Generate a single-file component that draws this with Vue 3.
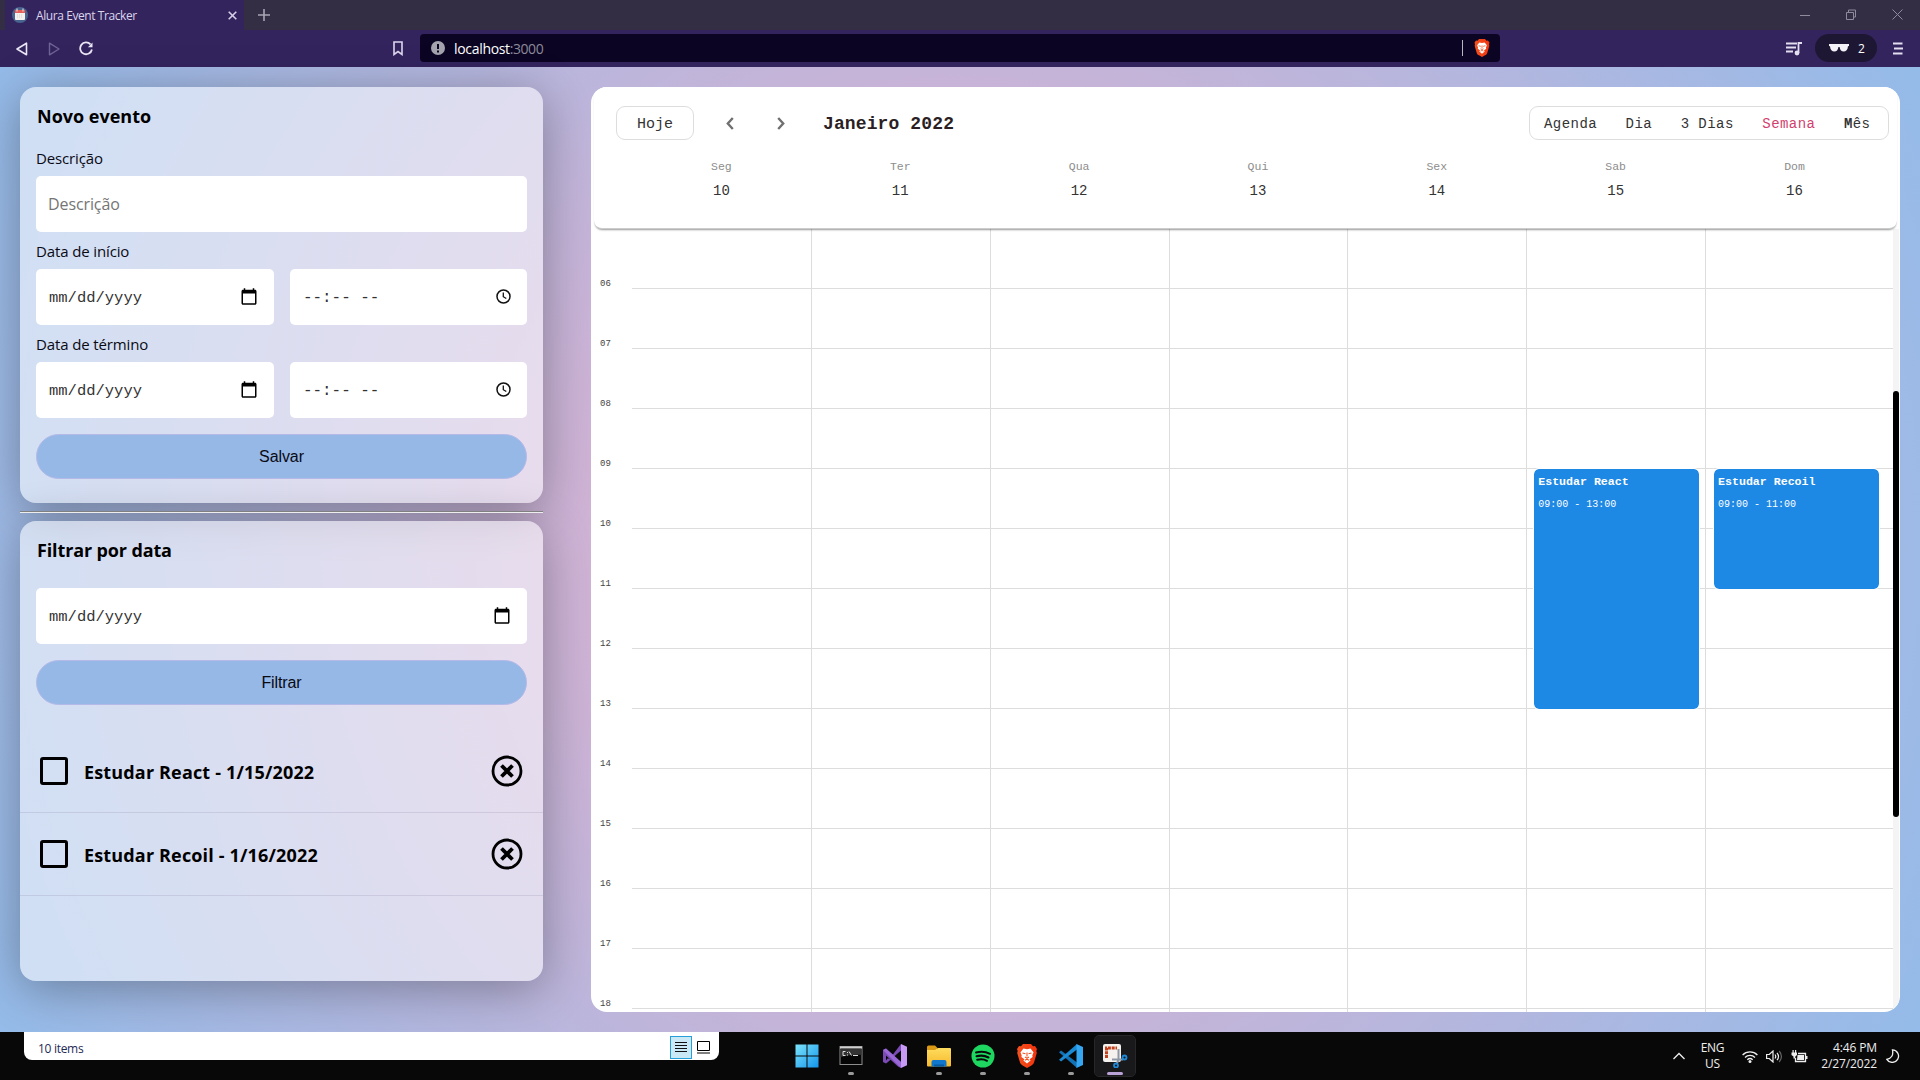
<script setup>
const hours = ['06', '07', '08', '09', '10', '11', '12', '13', '14', '15', '16', '17', '18']
const days = [['Seg', 10], ['Ter', 11], ['Qua', 12], ['Qui', 13], ['Sex', 14], ['Sab', 15], ['Dom', 16]]
const events = {
  5: { title: 'Estudar React', time: '09:00 - 13:00', hours: 4 },
  6: { title: 'Estudar Recoil', time: '09:00 - 11:00', hours: 2 },
}
const dateRows = ['Data de início', 'Data de término']
const tasks = ['Estudar React - 1/15/2022', 'Estudar Recoil - 1/16/2022']
</script>

<template>
  <svg width="0" height="0" class="defs" aria-hidden="true">
    <defs>
      <linearGradient id="gWin" x1="0" y1="0" x2="1" y2="1"><stop offset="0" stop-color="#7be3fb" /><stop offset="1" stop-color="#1495ec" /></linearGradient>
      <linearGradient id="gFold" x1="0" y1="0" x2="0" y2="1"><stop offset="0" stop-color="#ffdc5e" /><stop offset="1" stop-color="#f6b92c" /></linearGradient>
      <linearGradient id="gBrave" x1="0" y1="0" x2="1" y2="0"><stop offset="0" stop-color="#f4511e" /><stop offset="1" stop-color="#f2330d" /></linearGradient>
      <symbol id="brave" viewBox="0 0 20 24">
        <path fill="url(#gBrave)" d="M6 0h8l2 2.300 2-.3 2 3-.7 2 .5 2-2.800 9.500c-.5 1.500-1.500 2.300-3 3.300L10 24l-4-2.200c-1.500-1-2.500-1.800-3-3.300L.2 9l.5-2L0 5l2-3 2 .3z" />
        <path fill="#fff" d="M10 5.200l3.500-.7 3 3.700-1.200 3.200.3 1.600-3 2.200 1 1.300L10 19.500 6.400 16.500l1-1.300-3-2.200.3-1.600-1.200-3.200 3-3.700z" />
        <path d="M5.500 9l3 .8M14.500 9l-3 .8M10 8.500v4M8 13l2 1.200L12 13M8 16.200l2-1 2 1" stroke="#f4511e" stroke-width="1.100" fill="none" />
      </symbol>
      <symbol id="cal" viewBox="0 0 24 24">
        <path fill="#000" d="M20 3h-1V1h-2v2H7V1H5v2H4c-1.100 0-2 .9-2 2v16c0 1.100.9 2 2 2h16c1.100 0 2-.9 2-2V5c0-1.100-.9-2-2-2zm0 18H4V8h16v13z" />
      </symbol>
    </defs>
  </svg>
  <div class="screen">
    <header class="tabs">
      <div class="tab">
        <svg width="16" height="16" viewBox="0 0 16 16"><circle cx="8" cy="8" r="8" fill="#49638f" /><rect x="3" y="3" width="10" height="10" rx="1" fill="#f4f0ec" /><path d="M3 3h10v3H3z" fill="#e5605a" /><path d="M5 1.500v3M11 1.500v3" stroke="#f8e6e4" stroke-width="1" /><path d="M5 8h6M5 10h6" stroke="#d5ced0" stroke-dasharray="1 1" /></svg>
        <span>Alura Event Tracker</span>
        <svg class="x" width="9" height="9" viewBox="0 0 9 9"><path d="M.7.7l7.600 7.600M8.300.7L.7 8.300" stroke="#d5cfe6" stroke-width="1.600" /></svg>
      </div>
      <svg class="plus" width="12" height="12" viewBox="0 0 12 12"><path d="M6 0v12M0 6h12" stroke="#a9a5b4" stroke-width="1.600" /></svg>
      <div class="win">
        <svg width="10" height="11" viewBox="0 0 10 11"><path d="M0 6.500h10" stroke="#8f8b9c" /></svg>
        <svg width="10" height="11" viewBox="0 0 10 11"><path d="M.5 3.500h7v7h-7zM2.500 3V1h7v7H8" stroke="#8f8b9c" fill="none" /></svg>
        <svg width="11" height="11" viewBox="0 0 11 11"><path d="M.5.5l10 10M10.500.5l-10 10" stroke="#8f8b9c" /></svg>
      </div>
    </header>
    <nav class="bar">
      <div class="navs">
        <svg width="12" height="14" viewBox="0 0 12 14"><path d="M10.500 1.200v11.600L1 7z" fill="none" stroke="#eae6f4" stroke-width="1.600" stroke-linejoin="round" /></svg>
        <svg width="12" height="14" viewBox="0 0 12 14"><path d="M1.500 1.200v11.600L11 7z" fill="none" stroke="#6f6495" stroke-width="1.400" stroke-linejoin="round" /></svg>
        <svg width="15" height="15" viewBox="0 0 15 15"><path d="M12.900 8.500A5.900 5.900 0 1 1 11.500 3.400" fill="none" stroke="#eae6f4" stroke-width="1.800" /><path d="M13.500 1.500v4.800H8.900z" fill="#eae6f4" /></svg>
      </div>
      <svg class="mark" width="10" height="15" viewBox="0 0 10 15"><path d="M1 1h8v12.500L5 10.500l-4 3z" fill="none" stroke="#ddd6ee" stroke-width="1.600" /></svg>
      <div class="url">
        <svg width="14" height="14" viewBox="0 0 14 14"><circle cx="7" cy="7" r="7" fill="#a5a4ae" /><path d="M7 3v5M7 9.500v2" stroke="#0b0523" stroke-width="2" /></svg>
        <span class="addr">localhost<i>:3000</i></span>
        <span class="sep"></span>
        <svg width="16" height="18"><use href="#brave" /></svg>
      </div>
      <div class="tools">
        <svg width="17" height="14" viewBox="0 0 17 14"><path d="M0 1.500h11M0 5.500h10M0 9.500h7M12.500 11V1H16" stroke="#e3def0" stroke-width="1.800" fill="none" /><circle cx="11" cy="11" r="2.400" fill="#e3def0" /></svg>
        <div class="priv">
          <svg width="20" height="9" viewBox="0 0 20 9"><path d="M0 0h20v2l-1 .3C18.700 6 17 7.500 14.700 7.500S11 6 10.600 3h-1.200C9 6 7.600 7.500 5.300 7.500S1.300 6 1 2.300L0 2z" fill="#f3f2f6" /></svg>
          <span>2</span>
        </div>
        <svg width="10" height="13" viewBox="0 0 10 13"><path d="M0 1.500h9.500M1 6.500h9M0 11.500h9.500" stroke="#e3def0" stroke-width="1.800" /></svg>
      </div>
    </nav>

    <main class="page">
      <aside class="side">
        <form class="card form">
          <h3>Novo evento</h3>
          <label>Descrição</label>
          <div class="field ph">Descrição</div>
          <template v-for="l in dateRows" :key="l">
            <label>{{ l }}</label>
            <div class="pair">
              <div class="field date"><span>mm/dd/yyyy</span><svg width="18" height="19"><use href="#cal" /></svg></div>
              <div class="field time">
                <span>--:-- --</span>
                <svg width="15" height="15" viewBox="0 0 15 15"><circle cx="7.500" cy="7.500" r="6.500" fill="none" stroke="#111" stroke-width="1.500" /><path d="M7.300 3.500v4.200l3 1.800" fill="none" stroke="#111" stroke-width="1.300" /></svg>
              </div>
            </div>
          </template>
          <button type="button">Salvar</button>
        </form>
        <hr />
        <section class="card filter">
          <h3>Filtrar por data</h3>
          <div class="field date"><span>mm/dd/yyyy</span><svg width="18" height="19"><use href="#cal" /></svg></div>
          <button type="button">Filtrar</button>
          <ul>
            <li v-for="t in tasks" :key="t">
              <i class="check"></i>
              <b>{{ t }}</b>
              <svg width="32" height="32" viewBox="0 0 32 32"><circle cx="16" cy="16" r="14" fill="none" stroke="#000" stroke-width="2.800" /><path d="M10.500 10.500l11 11M21.500 10.500l-11 11" stroke="#000" stroke-width="3.800" /></svg>
            </li>
          </ul>
        </section>
      </aside>

      <section class="calendar">
        <div class="top">
          <div class="controls">
            <span class="today">Hoje</span>
            <svg class="arr" width="8" height="13" viewBox="0 0 8 13"><path d="M6.800 1L1.800 6.500 6.800 12" fill="none" stroke="#707070" stroke-width="2.400" /></svg>
            <svg class="arr next" width="8" height="13" viewBox="0 0 8 13"><path d="M1.200 1l5 5.500-5 5.500" fill="none" stroke="#707070" stroke-width="2.400" /></svg>
            <h2>Janeiro 2022</h2>
            <div class="views"><span>Agenda</span><span>Dia</span><span>3 Dias</span><span class="on">Semana</span><span class="month"><b>M</b>ês</span></div>
          </div>
          <div class="days">
            <div v-for="d in days" :key="d[0]" class="day"><small>{{ d[0] }}</small><span>{{ d[1] }}</span></div>
          </div>
        </div>
        <div class="body">
          <div class="hours"><div v-for="h in hours" :key="h">{{ h }}</div></div>
          <div v-for="(d, i) in days" :key="d[0]" class="col">
            <div v-for="h in hours" :key="h" class="cell"></div>
            <div v-if="events[i]" class="event" :style="{ height: events[i].hours * 60 + 'px' }">
              <b>{{ events[i].title }}</b>
              <span>{{ events[i].time }}</span>
            </div>
          </div>
          <div class="track"><div class="thumb"></div></div>
        </div>
      </section>
    </main>

    <footer class="task">
      <div class="explorer">
        <span>10 items</span>
        <div class="modes">
          <div class="sel"><svg width="12" height="12" viewBox="0 0 12 12"><path d="M0 1.500h12M0 4.500h12M0 7.500h12M0 10.500h12" stroke="#111" /></svg></div>
          <svg width="13" height="13" viewBox="0 0 13 13"><path d="M.5.5h12v9H.5zM0 12h13" fill="none" stroke="#000" /></svg>
        </div>
      </div>
      <div class="apps">
        <div><svg width="24" height="24" viewBox="0 0 24 24"><path fill="url(#gWin)" d="M.5.500h11v11H.5zM12.500.5h11v11h-11zM.5 12.500h11v11H.5zM12.500 12.500h11v11h-11z" /></svg></div>
        <div class="run">
          <svg width="24" height="24" viewBox="0 0 24 24"><rect x="1" y="2.500" width="22" height="18" fill="#050505" stroke="#8d8d8d" /><path d="M1 3.500h22" stroke="#cfcfcf" stroke-width="2" /><path d="M1.500 5h21v6C14 10 8 12 1.500 13z" fill="#333" /><path d="M6.500 7.500H4v4h2.500M8.500 8v1M8.500 10.500v1M10 7.500l2.500 4M14 11.500h5" fill="none" stroke="#ddd" /></svg>
        </div>
        <div>
          <svg width="24" height="24" viewBox="0 0 24 24"><path d="M0 6l3-1.500L18 18V24l-3-1.500L3 11.500v5L5 14l2 2-4 3.500L0 18z" fill="#7b4bb5" /><path d="M3 19.500L18 0v6.500L7 16z" fill="#7b4bb5" /><path d="M0 6l3-1.500L18 18V24z" fill="#9a68d6" /><path d="M18 0l6 2.800v18.400L18 24z" fill="#c79bf5" /></svg>
        </div>
        <div class="run">
          <svg width="24" height="24" viewBox="0 0 24 24"><path d="M0 3q0-1.500 1.500-1.500H8L10.500 4v4H0z" fill="#dc9a14" /><path d="M0 6h8l3-2h12q1 0 1 1v16.500q0 1-1 1H1q-1 0-1-1z" fill="url(#gFold)" /><path d="M4.500 22.500V18q0-2 2-2h11q2 0 2 2v4.500z" fill="#1177cc" /><path d="M7 20.500h10v2H7z" fill="#075a9f" /></svg>
        </div>
        <div class="run">
          <svg width="24" height="24" viewBox="0 0 24 24"><circle cx="12" cy="12" r="11.500" fill="#1ed760" /><path d="M5 8.500q7.500-2.200 14 1.300M5.500 12.300q6.500-1.800 12 1.200M6.200 15.800q5.500-1.500 9.800 1" fill="none" stroke="#0a0a0a" stroke-width="2" stroke-linecap="round" /></svg>
        </div>
        <div class="run"><svg width="20" height="24"><use href="#brave" /></svg></div>
        <div class="run">
          <svg width="24" height="24" viewBox="0 0 24 24"><path d="M0 8.300l2-1.800L18 18.500V24z" fill="#1173b5" /><path d="M0 15.700l2 1.800L18 5.500V0z" fill="#1b8ad4" /><path d="M17.500 0L24 3v18l-6.500 3z" fill="#35a6f2" /></svg>
        </div>
        <div class="run active">
          <svg width="26" height="24" viewBox="0 0 26 24"><rect x="1" y="0" width="18" height="18" rx="2" fill="#f4f1ef" /><path d="M4.500 14V4H15" fill="none" stroke="#c2401c" stroke-width="3" stroke-dasharray="3 .8" /><path d="M16.500 5v11L14.500 20M10 15.500h11" stroke="#8d99a6" stroke-width="2" fill="none" /><circle cx="22.500" cy="13.500" r="2" fill="none" stroke="#1e88d6" stroke-width="1.800" /><circle cx="14" cy="21.500" r="2" fill="none" stroke="#1e88d6" stroke-width="1.800" /></svg>
        </div>
      </div>
      <div class="tray">
        <svg width="12" height="8" viewBox="0 0 12 8"><path d="M.5 7L6 1.500 11.500 7" fill="none" stroke="#eee" stroke-width="1.300" /></svg>
        <div class="lang">ENG<br />US</div>
        <svg class="wifi" width="16" height="13" viewBox="0 0 16 13"><path d="M.6 5a10.500 10.500 0 0 1 14.800 0M3 7.500a7 7 0 0 1 10 0M5.300 9.700a4 4 0 0 1 5.400 0" fill="none" stroke="#eee" stroke-width="1.300" /><circle cx="8" cy="11.500" r="1.500" fill="#eee" /></svg>
        <svg class="vol" width="17" height="13" viewBox="0 0 17 13"><path d="M.6 4.500h2.700L7 1v11L3.300 8.500H.6z" fill="none" stroke="#eee" stroke-width="1.200" /><path d="M9 4.500q1.500 2 0 4M11 2.800q3 3.700 0 7.400" fill="none" stroke="#eee" stroke-width="1.200" /><path d="M13.200 1q4.500 5.500 0 11" fill="none" stroke="#666" stroke-width="1.200" /></svg>
        <svg class="bat" width="17" height="13" viewBox="0 0 17 13"><path d="M7 3.500h7.500v8h-10V8" fill="none" stroke="#eee" stroke-width="1.300" /><path d="M6.500 5H13v5H6zM15 6h1.500v3H15zM.5 2.500h5.500V5L4.300 6.500v2H2.500v-2L.5 5zM1.500 0h1.200v2.500H1.500zM4 0h1.200v2.500H4z" fill="#eee" /></svg>
        <div class="clock">4:46 PM<br />2/27/2022</div>
        <svg class="moon" width="14" height="14" viewBox="0 0 14 14"><path d="M6.500.8a6.300 6.300 0 1 1-5.700 9.500Q8 9 6.500.8z" fill="none" stroke="#eee" stroke-width="1.300" /></svg>
      </div>
    </footer>
  </div>
</template>

<style>
body { margin: 0; overflow: hidden; }
</style>

<style scoped>
* { box-sizing: border-box; }
svg { display: block; flex: none; }
.defs { position: absolute; }
.screen { width: 1920px; height: 1080px; display: flex; flex-direction: column; font-family: "Open Sans", "Noto Sans", sans-serif; overflow: hidden; }
.tabs { height: 30px; background: #332e44; display: flex; align-items: center; padding-left: 5px; }
.tab { width: 239px; height: 30px; background: #33245e; display: flex; align-items: center; padding: 0 7px 0 7px; font-size: 12px; color: #dcd5ec; }
.tab span { margin-left: 8px; letter-spacing: -.42px; }
.tab .x { margin-left: auto; }
.plus { margin-left: 14px; }
.win { margin-left: auto; display: flex; gap: 36px; padding-right: 17px; margin-top: -2px; }
.bar { height: 37px; background: #33245e; display: flex; align-items: center; }
.navs { display: flex; align-items: center; padding-left: 16px; gap: 20px; width: 392px; }
.navs svg:last-child { margin-left: -1px; }
.mark { margin-right: 17px; margin-left: 1px; }
.url { width: 1080px; height: 28px; margin-top: -1px; background: #0b0523; border-radius: 4px; display: flex; align-items: center; padding: 0 10px 0 11px; }
.addr { color: #fff; font-size: 14px; margin-left: 9px; letter-spacing: -.32px; }
.addr i { font-style: normal; color: #8d8a9a; letter-spacing: -.45px; }
.sep { margin-left: auto; width: 1px; height: 16px; background: #b9b6c4; margin-right: 11px; }
.tools { margin-left: auto; display: flex; align-items: center; padding-right: 17px; }
.priv { width: 62px; height: 28px; border-radius: 14px; background: #1d1733; margin: 0 16px 0 12px; display: flex; align-items: center; gap: 9px; padding-left: 14px; color: #fff; font-size: 12px; margin-top: -1px; }

.page { height: 965px; display: flex; padding: 20px; background: radial-gradient(circle, #eeaeca 0%, #94bbe9 100%); }
.side { width: 523px; margin-right: 48px; display: flex; flex-direction: column; flex: none; }
.card { background: rgba(255, 255, 255, .54); border-radius: 16px; box-shadow: 0 8px 48px rgba(0, 0, 0, .32); padding: 0 16px; }
.form { height: 416px; }
.filter { height: 460px; }
hr { margin: 8px 0; width: 100%; height: 2px; border: 0; border-top: 1px solid #808080; background: #eee; flex: none; position: relative; }
h3 { margin: 0; font-size: 18px; line-height: 24px; padding-top: 17px; height: 59px; color: #000; letter-spacing: 0; padding-left: 1px; }
label { display: block; height: 30px; line-height: 24px; font-size: 15px; color: #0a0a14; letter-spacing: -.13px; }
.field { height: 56px; background: #fff; border-radius: 5px; display: flex; align-items: center; padding: 0 12px; color: #333; }
.ph { font-size: 16px; color: #757575; margin-bottom: 7px; letter-spacing: -.1px; }
.pair { display: flex; gap: 16px; margin-bottom: 7px; }
.pair .date { width: 238px; }
.pair .time { width: 237px; }
.field span { font: 15.500px "Liberation Mono", monospace; padding: 1px 0 0 1px; }
.field svg { margin-left: auto; margin-top: -1px; }
.date { padding-right: 16px; }
.time { padding: 0 16px 0 12px; }
.time span { font-size: 15.900px; }
button { display: block; width: 100%; height: 45px; border-radius: 23px; border: 1px solid #b5b9e8; background: #95b8e7; font: 16px "Liberation Sans", sans-serif; color: #0a0a14; padding: 0; letter-spacing: -.1px; }
.form button { margin-top: 16px; }
.filter h3 { height: 67px; letter-spacing: -.13px; }
.filter button { margin-top: 16px; }
ul { list-style: none; margin: 25px -16px 0; padding: 0; }
li { height: 83px; border-bottom: 1px solid rgba(120, 110, 150, .18); display: flex; align-items: center; padding: 0 20px; }
li b { font-size: 18px; margin-left: 16px; margin-top: 1px; letter-spacing: .16px; }
li svg { margin-left: auto; }
.check { width: 28px; height: 28px; border: 3px solid #000; border-radius: 3px; }

.calendar { width: 1309px; height: 925px; background: #fff; border-radius: 16px; overflow: hidden; font-family: "Liberation Mono", monospace; color: #333; }
.top { position: relative; z-index: 2; height: 142px; margin: 0 3px; background: #fff; border-radius: 0 0 8px 8px; border-bottom: 1px solid #ccc; box-shadow: 0 2px 2px -1px rgba(0, 0, 0, .4); }
.controls { display: flex; align-items: center; padding: 19px 8px 0 22px; height: 53px; }
.today, .views { height: 34px; border: 1px solid #ddd; border-radius: 9px; display: flex; align-items: center; font-size: 14px; letter-spacing: .45px; padding-top: 2px; }
.today { width: 78px; justify-content: center; font-size: 15px; letter-spacing: 0; }
.arr { margin-left: 32px; }
.next { margin-left: 43px; }
h2 { margin: 2px 0 0 38px; font-size: 18px; line-height: 20px; color: #2b1f24; letter-spacing: .12px; }
.views { margin-left: auto; width: 360px; padding: 2px 0 0 14px; gap: 28.500px; white-space: pre; }
.views .on { color: #d23f6e; }
.days { display: flex; padding-left: 38px; margin-top: 18px; }
.day { width: 178.850px; display: flex; flex-direction: column; align-items: center; }
.day small { font-size: 11.500px; line-height: 16px; color: #8d8d8d; padding-top: 1px; }
.day span { font-size: 14px; line-height: 20px; margin-top: 6px; }
.body { display: flex; height: 783px; }
.hours { width: 41px; padding: 49px 0 0 9px; font-size: 9px; color: #444; }
.hours div { height: 60px; line-height: 12px; }
.col { width: 178.850px; position: relative; flex: none; }
.col:nth-last-child(2) { width: 187.900px; }
.col + .col { border-left: 1px solid #ddd; }
.cell { height: 60px; border-bottom: 1px solid #ddd; }
.event { position: absolute; top: 240px; left: 7px; width: 165px; background: #1e88e5; border-radius: 5px; outline: 1px solid #fff; color: #fff; padding: 4px; display: flex; flex-direction: column; }
.col:nth-last-child(2) .event { left: 8px; }
.event b { font-size: 11.600px; line-height: 18px; }
.event span { font-size: 10px; line-height: 16px; margin-top: 6px; }
.track { width: 6px; height: 781px; background: #f4f4f4; padding-top: 162px; }
.thumb { height: 426px; background: #000; border-radius: 3px; }

.task { height: 48px; background: #080809; display: flex; position: relative; color: #eee; }
.explorer { width: 695px; height: 28px; margin-left: 24px; background: #fff; border-radius: 0 0 8px 8px; display: flex; align-items: center; padding: 4px 9px 0 14px; color: #1f2b57; font-size: 12px; letter-spacing: -.3px; }
.modes { margin: -1px 0 1px auto; display: flex; align-items: center; gap: 5px; }
.sel { width: 22px; height: 23px; border: 1px solid #26a0da; background: #cbe8f6; display: grid; place-items: center; }
.apps { display: flex; margin-left: 68px; gap: 4px; padding-top: 4px; }
.apps > div { width: 40px; height: 40px; display: grid; place-items: center; position: relative; border-radius: 4px; }
.apps .run::after { content: ""; position: absolute; bottom: 1px; left: 17px; width: 6px; height: 3px; border-radius: 2px; background: #9a9a9a; }
.apps .active { background: #19191c; outline: 1px solid #27272a; }
.apps .run.active::after { width: 16px; left: 12px; background: #b9a3d6; }
.tray { margin-left: auto; display: flex; align-items: center; padding-right: 20px; font-size: 12px; line-height: 16px; }
.lang { text-align: center; margin-left: 16px; letter-spacing: -.3px; }
.wifi { margin-left: 18px; }
.vol { margin-left: 8px; }
.bat { margin-left: 8px; }
.clock { text-align: right; margin-left: 13px; letter-spacing: -.12px; }
.moon { margin-left: 9px; }
</style>
